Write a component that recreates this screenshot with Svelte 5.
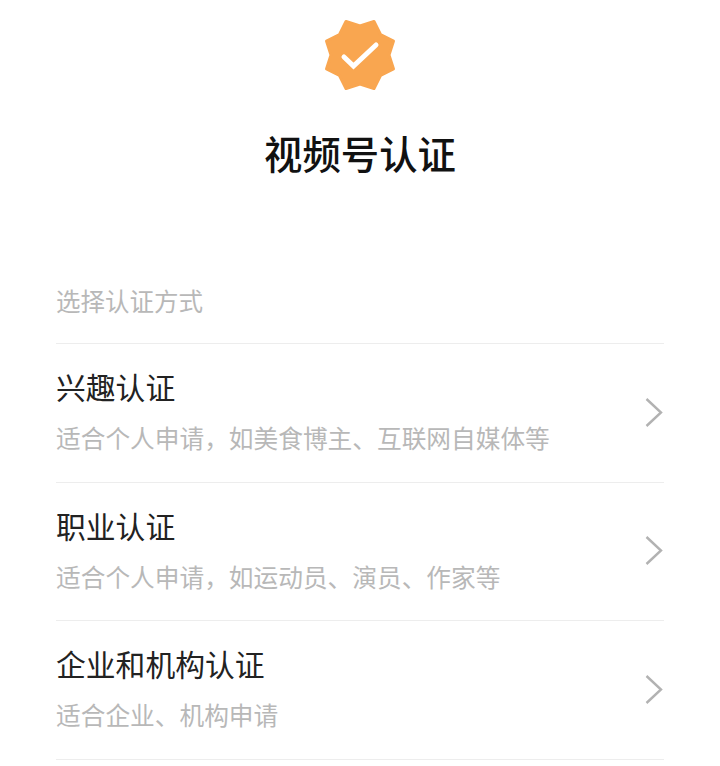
<script>
  const comma = '\uFF0C';
  const rows = [
    { title: '兴趣认证', sub: '适合个人申请' + comma + '如美食博主、互联网自媒体等' },
    { title: '职业认证', sub: '适合个人申请' + comma + '如运动员、演员、作家等' },
    { title: '企业和机构认证', sub: '适合企业、机构申请' }
  ];
</script>

<div class="page">
  <svg class="badge" width="80" height="80" viewBox="0 0 80 80">
    <path fill="#f9a650" stroke="#f9a650" stroke-width="3" stroke-linejoin="round" d="M26 6.5 L40 11 L54 6.5 L60.5 19.5 L73.5 26 L69 40 L73.5 54 L60.5 60.5 L54 73.5 L40 69 L26 73.5 L19.5 60.5 L6.5 54 L11 40 L6.5 26 L19.5 19.5 Z"/>
    <path fill="none" stroke="#fff" stroke-width="5" stroke-linecap="round" d="M24 42 L33.5 51 L56 30"/>
  </svg>
  <h1>视频号认证</h1>
  <div class="label">选择认证方式</div>
  {#each rows as r}
    <div class="row">
      <div class="text">
        <div class="title">{r.title}</div>
        <div class="sub">{r.sub}</div>
      </div>
      <svg class="chev" width="20" height="32" viewBox="0 0 20 32"><path fill="none" stroke="#b2b2b2" stroke-width="2.4" d="M2.5 2 L17 15.5 L2.5 29"/></svg>
    </div>
  {/each}
</div>

<style>
  :global(body) { margin: 0; background: #fff; }
  .page {
    width: 720px; height: 766px; box-sizing: border-box; overflow: hidden;
    padding: 15px 56px 0; display: flex; flex-direction: column;
    font-family: "Noto Sans CJK SC", sans-serif;
  }
  .badge { align-self: center; flex: none; }
  h1 { margin: 29px 0 0; font-size: 38.4px; line-height: 56px; font-weight: 500; text-align: center; color: #111; }
  .label { margin-top: 103px; font-size: 24.5px; line-height: 36px; color: #b8b8b8; padding-bottom: 24px; }
  .row {
    border-top: 1px solid #ededed; height: 137.6px; flex: none;
    display: flex; align-items: center; justify-content: space-between;
  }
  .row:last-child { border-bottom: 1px solid #ededed; }
  .text { padding-bottom: 4px; }
  .title { font-size: 29.8px; line-height: 40px; color: #222; }
  .sub { margin-top: 13px; font-size: 24.7px; line-height: 36px; color: #b8b8b8; }
  .chev { flex: none; }
</style>
